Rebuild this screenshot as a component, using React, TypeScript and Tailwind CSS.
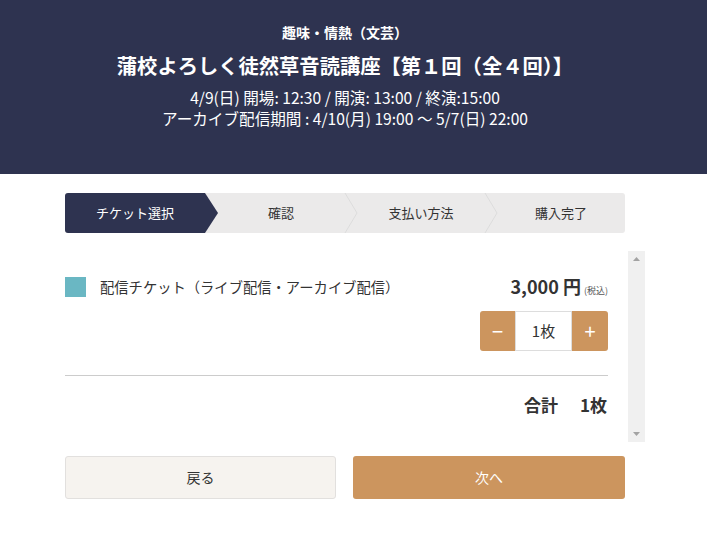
import { useState } from "react";

const steps = ["チケット選択", "確認", "支払い方法", "購入完了"];

export default function App() {
    const [count, setCount] = useState(1); // 枚数

    return (
        <div className="min-h-[548px] bg-white text-[#333]" style={{ fontFamily: '"Noto Sans CJK JP", "Noto Sans", sans-serif' }}>
            {/* ヘッダー */}
            <header className="bg-[#2e3350] h-[174px] text-white">
                <div className="w-[690px] flex flex-col items-center pt-[22px]">
                    <p className="text-[14px] font-bold leading-[20px]">趣味・情熱（文芸）</p>
                    <h1 className="text-[20.3px] font-bold leading-[28px] mt-[9px]">蒲校よろしく徒然草音読講座【第１回（全４回）】</h1>
                    <p className="text-[15.6px] leading-[21px] mt-[8px]">4/9(日) 開場: 12:30 / 開演: 13:00 / 終演:15:00</p>
                    <p className="text-[15.6px] leading-[21px]">アーカイブ配信期間 : 4/10(月) 19:00 〜 5/7(日) 22:00</p>
                </div>
            </header>

            <main className="ml-[65px] w-[560px]">
                {/* ステップ */}
                <div className="mt-[19px] h-[40px] flex bg-[#ebeaea] rounded-[3px]">
                    {steps.map((step, i) => (
                        <div
                            key={step}
                            className={`relative w-[140px] flex items-center justify-center text-[13px] ${i === 0 ? "bg-[#2e3350] text-white rounded-l-[3px]" : "pl-[12px] text-[#333]"}`}
                        >
                            {step}
                            {i === 0 && (
                                <svg className="absolute right-[-13px] top-0 z-10" width="13" height="40" viewBox="0 0 13 40">
                                    <polygon points="0,0 13,20 0,40" fill="#2e3350" />
                                </svg>
                            )}
                            {i > 0 && i < 3 && (
                                <svg className="absolute right-[-13px] top-0 z-10" width="14" height="40" viewBox="0 0 14 40">
                                    <polyline points="1,0 13,20 1,40" fill="none" stroke="#dcdcdc" strokeWidth="1" />
                                </svg>
                            )}
                        </div>
                    ))}
                </div>

                {/* チケット一覧 */}
                <div className="mt-[18px] flex h-[191px] w-[580px]">
                    <div className="w-[543px]">
                        <div className="mt-[22px] flex items-center justify-between">
                            <div className="flex items-center">
                                <span className="w-[21px] h-[20px] bg-[#6ab7c3]" />
                                <span className="ml-[14px] text-[14.3px]">配信チケット（ライブ配信・アーカイブ配信）</span>
                            </div>
                            <div className="flex items-baseline">
                                <span className="text-[18px] font-bold">3,000 円</span>
                                <span className="ml-[3px] text-[9px] text-[#555]">(税込)</span>
                            </div>
                        </div>
                        <div className="mt-[11px] flex justify-end">
                            <div className="flex h-[40px] rounded-[3px] overflow-hidden">
                                <button onClick={() => setCount(Math.max(0, count - 1))} className="w-[35px] bg-[#cc955e] text-white text-[20px] flex items-center justify-center">
                                    −
                                </button>
                                <div className="w-[57px] border border-[#ddd] bg-white flex items-center justify-center text-[15px]">{count}枚</div>
                                <button onClick={() => setCount(count + 1)} className="w-[36px] bg-[#cc955e] text-white text-[20px] flex items-center justify-center">
                                    +
                                </button>
                            </div>
                        </div>
                        <div className="mt-[24px] border-t border-[#ccc]" />
                        <div className="mt-[16px] flex justify-end text-[17px] font-bold pr-[1px]">
                            <span>合計</span>
                            <span className="ml-[22px]">{count}枚</span>
                        </div>
                    </div>
                    {/* スクロールバー */}
                    <div className="ml-[20px] w-[17px] bg-[#f0f0f0] flex flex-col items-center justify-between py-[6px]">
                        <svg width="7" height="4" viewBox="0 0 7 4"><polygon points="0,4 3.5,0 7,4" fill="#a3a3a3" /></svg>
                        <svg width="7" height="4" viewBox="0 0 7 4"><polygon points="0,0 3.5,4 7,0" fill="#a3a3a3" /></svg>
                    </div>
                </div>

                {/* ボタン */}
                <div className="mt-[14px] flex gap-[17px]">
                    <button className="w-[271px] h-[43px] bg-[#f6f3ef] border border-[#e2e0de] rounded-[3px] text-[14px] text-[#333]">戻る</button>
                    <button className="w-[272px] h-[43px] bg-[#cc955e] rounded-[3px] text-[14px] text-white">次へ</button>
                </div>
            </main>
        </div>
    );
}
